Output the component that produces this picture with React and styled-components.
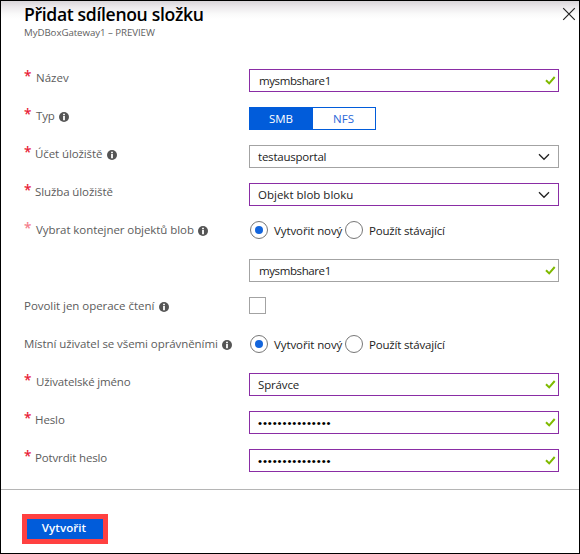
import React from 'react';
import styled, { createGlobalStyle } from 'styled-components';

const GlobalStyle = createGlobalStyle`
  *, *::before, *::after { box-sizing: border-box; }
  body { margin: 0; background: #fff; }
`;

const Panel = styled.main`
  display: flex;
  flex-direction: column;
  width: 580px;
  height: 554px;
  border: 1px solid #000;
  background: linear-gradient(#d9d5d9 0, #ece9ec 6px, #fafafa 13px, #fff 18px) no-repeat;
  font-family: "Open Sans", "Noto Sans", sans-serif;
  font-size: 11.5px;
  color: #1c1c1c;
`;

const Header = styled.header`
  display: flex;
  justify-content: space-between;
  height: 68px;
  padding: 0 3px 0 23px;
`;

const Title = styled.h1`
  margin: 0;
  font-size: 17.6px;
  line-height: 26px;
  font-weight: 600;
  letter-spacing: -0.34px;
  color: #000;
`;

const Subtitle = styled.div`
  font-size: 9.7px;
  line-height: 11px;
  letter-spacing: -0.06px;
  color: #606060;
`;

const CloseButton = styled.button`
  width: 14px;
  height: 14px;
  margin-top: 6px;
  padding: 0;
  border: 0;
  background: none;
  svg { display: block; }
`;

const Form = styled.div`
  display: flex;
  flex-direction: column;
  gap: 15px;
  height: 420px;
  padding-left: 23px;
`;

const Row = styled.div`
  display: grid;
  grid-template-columns: 225px 310px;
  height: 23px;
`;

const Label = styled.div`
  display: flex;
  height: 17px;
  line-height: 17px;
  white-space: nowrap;
  color: #5c5c5c;
  letter-spacing: ${(p) => p.$spacing || 0}px;
  svg { margin: 5px 0 0 4.5px; flex: none; }
`;

const Required = styled.span`
  width: ${(p) => p.$width || 12}px;
  font-size: 13.5px;
  line-height: 15px;
  font-weight: 600;
  letter-spacing: 0;
  color: ${(p) => (p.$soft ? '#f4808c' : '#e81b36')};
`;

const Field = styled.div`
  display: flex;
  align-items: center;
  justify-content: space-between;
  height: 23px;
  padding: 0 ${(p) => (p.$select ? 8 : 2)}px 0 ${(p) => (p.$inset || 8)}px;
  border: 1px solid ${(p) => (p.$edited ? '#8a2da5' : '#a3a3a3')};
  background: #fff;
  line-height: 21px;
  letter-spacing: ${(p) => p.$spacing || 0}px;
`;

const Password = styled.span`
  padding-top: 2px;
  font-family: "Liberation Sans", sans-serif;
  font-size: 11.5px;
  letter-spacing: 0.87px;
  color: #000;
`;

const Segments = styled.div`
  display: grid;
  grid-template-columns: 63px 62px;
  width: 127px;
  height: 23px;
  border: 1px solid #015cda;
`;

const Segment = styled.div`
  padding-right: 1px;
  text-align: center;
  line-height: 21px;
  background: ${(p) => (p.$active ? '#015cda' : '#fff')};
  color: ${(p) => (p.$active ? '#fff' : '#2a68d8')};
`;

const RadioGroup = styled.div`
  display: flex;
  padding-left: 1px;
`;

const Option = styled.div`
  display: flex;
  gap: 6px;
  width: 95px;
  height: 18px;
  line-height: 19px;
  white-space: nowrap;
  letter-spacing: ${(p) => p.$spacing}px;
`;

const Radio = styled.span`
  display: grid;
  place-items: center;
  flex: none;
  width: 18px;
  height: 18px;
  border: 1px solid #777;
  border-radius: 50%;
  &::before {
    content: '';
    width: 8px;
    height: 8px;
    border-radius: 50%;
    background: ${(p) => (p.$checked ? '#1365dc' : 'transparent')};
  }
`;

const Checkbox = styled.span`
  width: 17px;
  height: 17px;
  border: 1px solid #a3a3a3;
`;

const Footer = styled.footer`
  flex: 1;
  border-top: 1px solid #b5b5b5;
  padding: 24px 0 0 21px;
`;

const Highlight = styled.div`
  width: 86px;
  height: 30px;
  border: 5px solid #ff4141;
`;

const CreateButton = styled.button`
  display: block;
  width: 76px;
  height: 20px;
  padding: 0 2px 2px 0;
  border: 0;
  background: #015cda;
  color: #fff;
  font: 600 11.5px/18px "Open Sans", "Noto Sans", sans-serif;
  letter-spacing: 0.1px;
`;

const Info = () => (
  <svg width="10" height="10" viewBox="0 0 10 10">
    <circle cx="5" cy="5" r="5" fill="#555" />
    <path d="M4.1 1.7h1.8v1.5H4.1zM4.1 4.1h1.8v4.1H4.1z" fill="#fff" />
  </svg>
);

const Check = () => (
  <svg width="11" height="9" viewBox="0 0 11 9">
    <path d="M1 4.2 4.2 7.4 9.7 1" fill="none" stroke="#7fba00" strokeWidth="2" />
  </svg>
);

const Chevron = () => (
  <svg width="12" height="8" viewBox="0 0 12 8">
    <path d="M1 1.2 6 6.3 11 1.2" fill="none" stroke="#222" strokeWidth="1.3" />
  </svg>
);

const FormRow = ({ label, spacing, required, starWidth, soft, info, children }) => (
  <Row>
    <Label $spacing={spacing}>
      {required && <Required $soft={soft} $width={starWidth}>*</Required>}
      {label}
      {info && <Info />}
    </Label>
    {children}
  </Row>
);

const SourceOptions = () => (
  <RadioGroup>
    <Option $spacing={-0.1}><Radio $checked />Vytvořit nový</Option>
    <Option $spacing={-0.18}><Radio />Použít stávající</Option>
  </RadioGroup>
);

export default function App() {
  return (
    <>
      <GlobalStyle />
      <Panel>
        <Header>
          <div>
            <Title>Přidat sdílenou složku</Title>
            <Subtitle>MyDBoxGateway1 – PREVIEW</Subtitle>
          </div>
          <CloseButton aria-label="Zavřít">
            <svg width="14" height="14" viewBox="0 0 14 14">
              <path d="M1.2 1.2 12.8 12.8M12.8 1.2 1.2 12.8" stroke="#222" strokeWidth="1.2" />
            </svg>
          </CloseButton>
        </Header>
        <Form>
          <FormRow label="Název" required>
            <Field $edited $inset={9} $spacing={-0.4}>mysmbshare1<Check /></Field>
          </FormRow>
          <FormRow label="Typ" spacing={-0.2} required info>
            <Segments>
              <Segment $active>SMB</Segment>
              <Segment>NFS</Segment>
            </Segments>
          </FormRow>
          <FormRow label="Účet úložiště" spacing={-0.1} starWidth={11} required info>
            <Field $select $spacing={-0.22}>testausportal<Chevron /></Field>
          </FormRow>
          <FormRow label="Služba úložiště" spacing={-0.1} starWidth={11} required>
            <Field $edited $select>Objekt blob bloku<Chevron /></Field>
          </FormRow>
          <FormRow label="Vybrat kontejner objektů blob" spacing={-0.07} required soft info>
            <SourceOptions />
          </FormRow>
          <FormRow>
            <Field $inset={9} $spacing={-0.4}>mysmbshare1<Check /></Field>
          </FormRow>
          <FormRow label="Povolit jen operace čtení" spacing={-0.04} info>
            <Checkbox />
          </FormRow>
          <FormRow label="Místní uživatel se všemi oprávněními" spacing={-0.08} info>
            <SourceOptions />
          </FormRow>
          <FormRow label="Uživatelské jméno" spacing={-0.16} required>
            <Field $edited $spacing={-0.15}>Správce<Check /></Field>
          </FormRow>
          <FormRow label="Heslo" spacing={-0.1} starWidth={11} required>
            <Field $edited><Password>•••••••••••••••</Password><Check /></Field>
          </FormRow>
          <FormRow label="Potvrdit heslo" spacing={-0.15} starWidth={11} required>
            <Field $edited><Password>•••••••••••••••</Password><Check /></Field>
          </FormRow>
        </Form>
        <Footer>
          <Highlight>
            <CreateButton>Vytvořit</CreateButton>
          </Highlight>
        </Footer>
      </Panel>
    </>
  );
}
